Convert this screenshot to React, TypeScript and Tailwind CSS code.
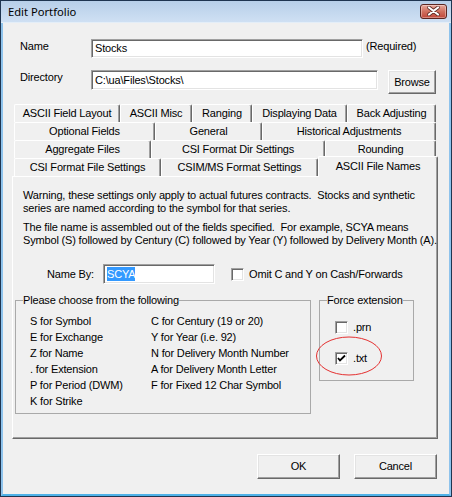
import React from "react";

const sunken =
  "border border-t-[#a0a0a0] border-l-[#a0a0a0] border-r-white border-b-white shadow-[inset_1px_1px_0_#696969,inset_-1px_-1px_0_#e3e3e3] bg-white";
const raised =
  "border border-t-white border-l-white border-r-[#696969] border-b-[#696969] shadow-[inset_-1px_-1px_0_#a0a0a0,inset_1px_1px_0_#e3e3e3] bg-[#f0f0f0]";

function Tab({ label, w, selected }: { label: string; w: number; selected?: boolean }) {
  if (selected) {
    return (
      <div
        className="relative z-10 h-[21px] mb-[-1px] flex items-center justify-center bg-[#f0f0f0] border-l border-t border-white border-r border-r-[#696969] shadow-[inset_-1px_0_0_#a0a0a0] rounded-t-[2px] shrink-0"
        style={{ width: w }}
      >
        <span className="-mt-[2px]">{label}</span>
      </div>
    );
  }
  return (
    <div
      className="h-[18px] flex items-center justify-center bg-[#f0f0f0] border-l border-t border-white border-r border-r-[#696969] shadow-[inset_-1px_0_0_#a0a0a0] rounded-t-[2px] shrink-0"
      style={{ width: w }}
    >
      {label}
    </div>
  );
}

function CheckBox({ checked }: { checked?: boolean }) {
  return (
    <div className={`w-[13px] h-[13px] shrink-0 flex items-center justify-center ${sunken}`}>
      {checked && (
        <svg width="9" height="9" viewBox="0 0 9 9">
          <path d="M1 4 L3 6.5 L8 1.5" stroke="#000" strokeWidth="1.8" fill="none" />
        </svg>
      )}
    </div>
  );
}

export default function App() {
  return (
    <div className="w-[452px] h-[497px] flex flex-col border border-[#1f3550] bg-[#f0f0f0] font-['Liberation_Sans',Arial,sans-serif] text-[11px] leading-[13px] tracking-[-0.17px] text-black overflow-hidden">
      {/* Title bar */}
      <div className="h-[22px] shrink-0 flex items-center justify-between pl-[7px] pr-[4px] bg-gradient-to-b from-[#b7cfe9] to-[#cfe0f3] border-b border-[#e4eef8]">
        <span className="font-['Noto_Sans',sans-serif] text-[11.2px] leading-[16px] tracking-normal text-black">Edit Portfolio</span>
        <div className="w-[27px] h-[15px] mt-[-1px] rounded-[3px] border border-[#5b2621] bg-gradient-to-b from-[#e8a89c] via-[#d0705f] to-[#c0463a] flex items-center justify-center shadow-[inset_0_0_0_1px_rgba(255,255,255,0.35)]">
          <svg width="13" height="10" viewBox="0 0 13 10">
            <path d="M2 1.5 L11 8.5 M11 1.5 L2 8.5" stroke="#5a2a24" strokeWidth="3.6" strokeLinecap="round" />
            <path d="M2 1.5 L11 8.5 M11 1.5 L2 8.5" stroke="#ffffff" strokeWidth="2.2" strokeLinecap="round" />
          </svg>
        </div>
      </div>

      {/* Client */}
      <div className="flex-1 flex flex-col border-x-2 border-b-2 border-x-[#8ec3ec] border-b-[#4fb2e8] pr-[12px]">
        {/* Name row */}
        <div className="flex items-start pl-[17px] pt-[16px]">
          <div className="w-[71px] pt-[1px]">Name</div>
          <div className={`w-[272px] h-[19px] pl-[3px] flex items-center ${sunken}`}>Stocks</div>
          <div className="ml-[3px] pt-[1px]">(Required)</div>
        </div>
        {/* Directory row */}
        <div className="flex items-start pl-[17px] mt-[12px]">
          <div className="w-[71px] pt-[1px]">Directory</div>
          <div className={`w-[287px] h-[20px] pl-[3px] flex items-center ${sunken}`}>C:\ua\Files\Stocks\</div>
          <button className={`ml-[10px] w-[48px] h-[24px] flex items-center justify-center ${raised}`}>Browse</button>
        </div>

        {/* Tabs + panel */}
        <div className="ml-[9px] mt-[10px] flex flex-col">
          <div className="pl-[2px] flex flex-col">
            <div className="flex">
              <Tab label="ASCII Field Layout" w={106} />
              <Tab label="ASCII Misc" w={72} />
              <Tab label="Ranging" w={60} />
              <Tab label="Displaying Data" w={95} />
              <Tab label="Back Adjusting" w={89} />
            </div>
            <div className="flex">
              <Tab label="Optional Fields" w={141} />
              <Tab label="General" w={107} />
              <Tab label="Historical Adjustments" w={174} />
            </div>
            <div className="flex">
              <Tab label="Aggregate Files" w={137} />
              <Tab label="CSI Format Dir Settings" w={174} />
              <Tab label="Rounding" w={111} />
            </div>
            <div className="flex items-end h-[18px]">
              <Tab label="CSI Format File Settings" w={147} />
              <Tab label="CSIM/MS Format Settings" w={157} />
              <Tab label="ASCII File Names" w={120} selected />
            </div>
          </div>

          {/* Panel */}
          <div className="w-[426px] h-[263px] border border-t-white border-l-white border-r-[#696969] border-b-[#696969] shadow-[inset_-1px_-1px_0_#a0a0a0] pl-[2px] pt-[12px] flex flex-col">
            <div className="pl-[8px] whitespace-nowrap">
              <p>Warning, these settings only apply to actual futures contracts.&nbsp; Stocks and synthetic</p>
              <p>series are named according to the symbol for that series.</p>
              <p className="mt-[6px]">The file name is assembled out of the fields specified.&nbsp; For example, SCYA means</p>
              <p>Symbol (S) followed by Century (C) followed by Year (Y) followed by Delivery Month (A).</p>
            </div>

            <div className="flex items-center mt-[17px] pl-[32px] h-[20px]">
              <div className="w-[56px]">Name By:</div>
              <div className={`w-[112px] h-[20px] pl-[3px] flex items-center ${sunken}`}>
                <span className="bg-[#3399ff] text-white leading-[14px]">SCYA</span>
              </div>
              <div className="ml-[16px]">
                <CheckBox />
              </div>
              <div className="ml-[5px]">Omit C and Y on Cash/Forwards</div>
            </div>

            <div className="flex items-start mt-[10px]">
              <fieldset className="w-[296px] h-[120px] border border-[#a9a9a9] m-0 p-0">
                <legend className="ml-[7px] px-[0px] leading-[13px]">Please choose from the following</legend>
                <div className="grid grid-cols-[121px_1fr] auto-rows-[16px] mt-[6px] pl-[14px] items-center">
                  <div>S for Symbol</div>
                  <div>C for Century (19 or 20)</div>
                  <div>E for Exchange</div>
                  <div>Y for Year (i.e. 92)</div>
                  <div>Z for Name</div>
                  <div>N for Delivery Month Number</div>
                  <div>. for Extension</div>
                  <div>A for Delivery Month Letter</div>
                  <div>P for Period (DWM)</div>
                  <div>F for Fixed 12 Char Symbol</div>
                  <div>K for Strike</div>
                  <div></div>
                </div>
              </fieldset>

              <fieldset className="relative ml-[8px] w-[95px] h-[87px] border border-[#a9a9a9] m-0 p-0">
                <legend className="ml-[7px] px-[0px] leading-[13px] whitespace-nowrap">Force extension</legend>
                <div className="pl-[15px]">
                  <div className="flex items-center mt-[14px] h-[13px]">
                    <CheckBox />
                    <span className="ml-[5px]">.prn</span>
                  </div>
                  <div className="flex items-center mt-[18px] h-[13px]">
                    <CheckBox checked />
                    <span className="ml-[5px]">.txt</span>
                  </div>
                </div>
                <svg
                  className="absolute left-[-5px] top-[28px] pointer-events-none"
                  width="68"
                  height="42"
                  viewBox="0 0 68 42"
                >
                  <ellipse cx="34" cy="21" rx="32.5" ry="19" fill="none" stroke="#e53030" strokeWidth="1" />
                </svg>
              </fieldset>
            </div>
          </div>
        </div>

        {/* Buttons */}
        <div className="flex justify-end gap-[14px] mt-[15px]">
          <button className={`w-[83px] h-[25px] flex items-center justify-center ${raised}`}>OK</button>
          <button className={`w-[83px] h-[25px] flex items-center justify-center ${raised}`}>Cancel</button>
        </div>
      </div>
    </div>
  );
}
